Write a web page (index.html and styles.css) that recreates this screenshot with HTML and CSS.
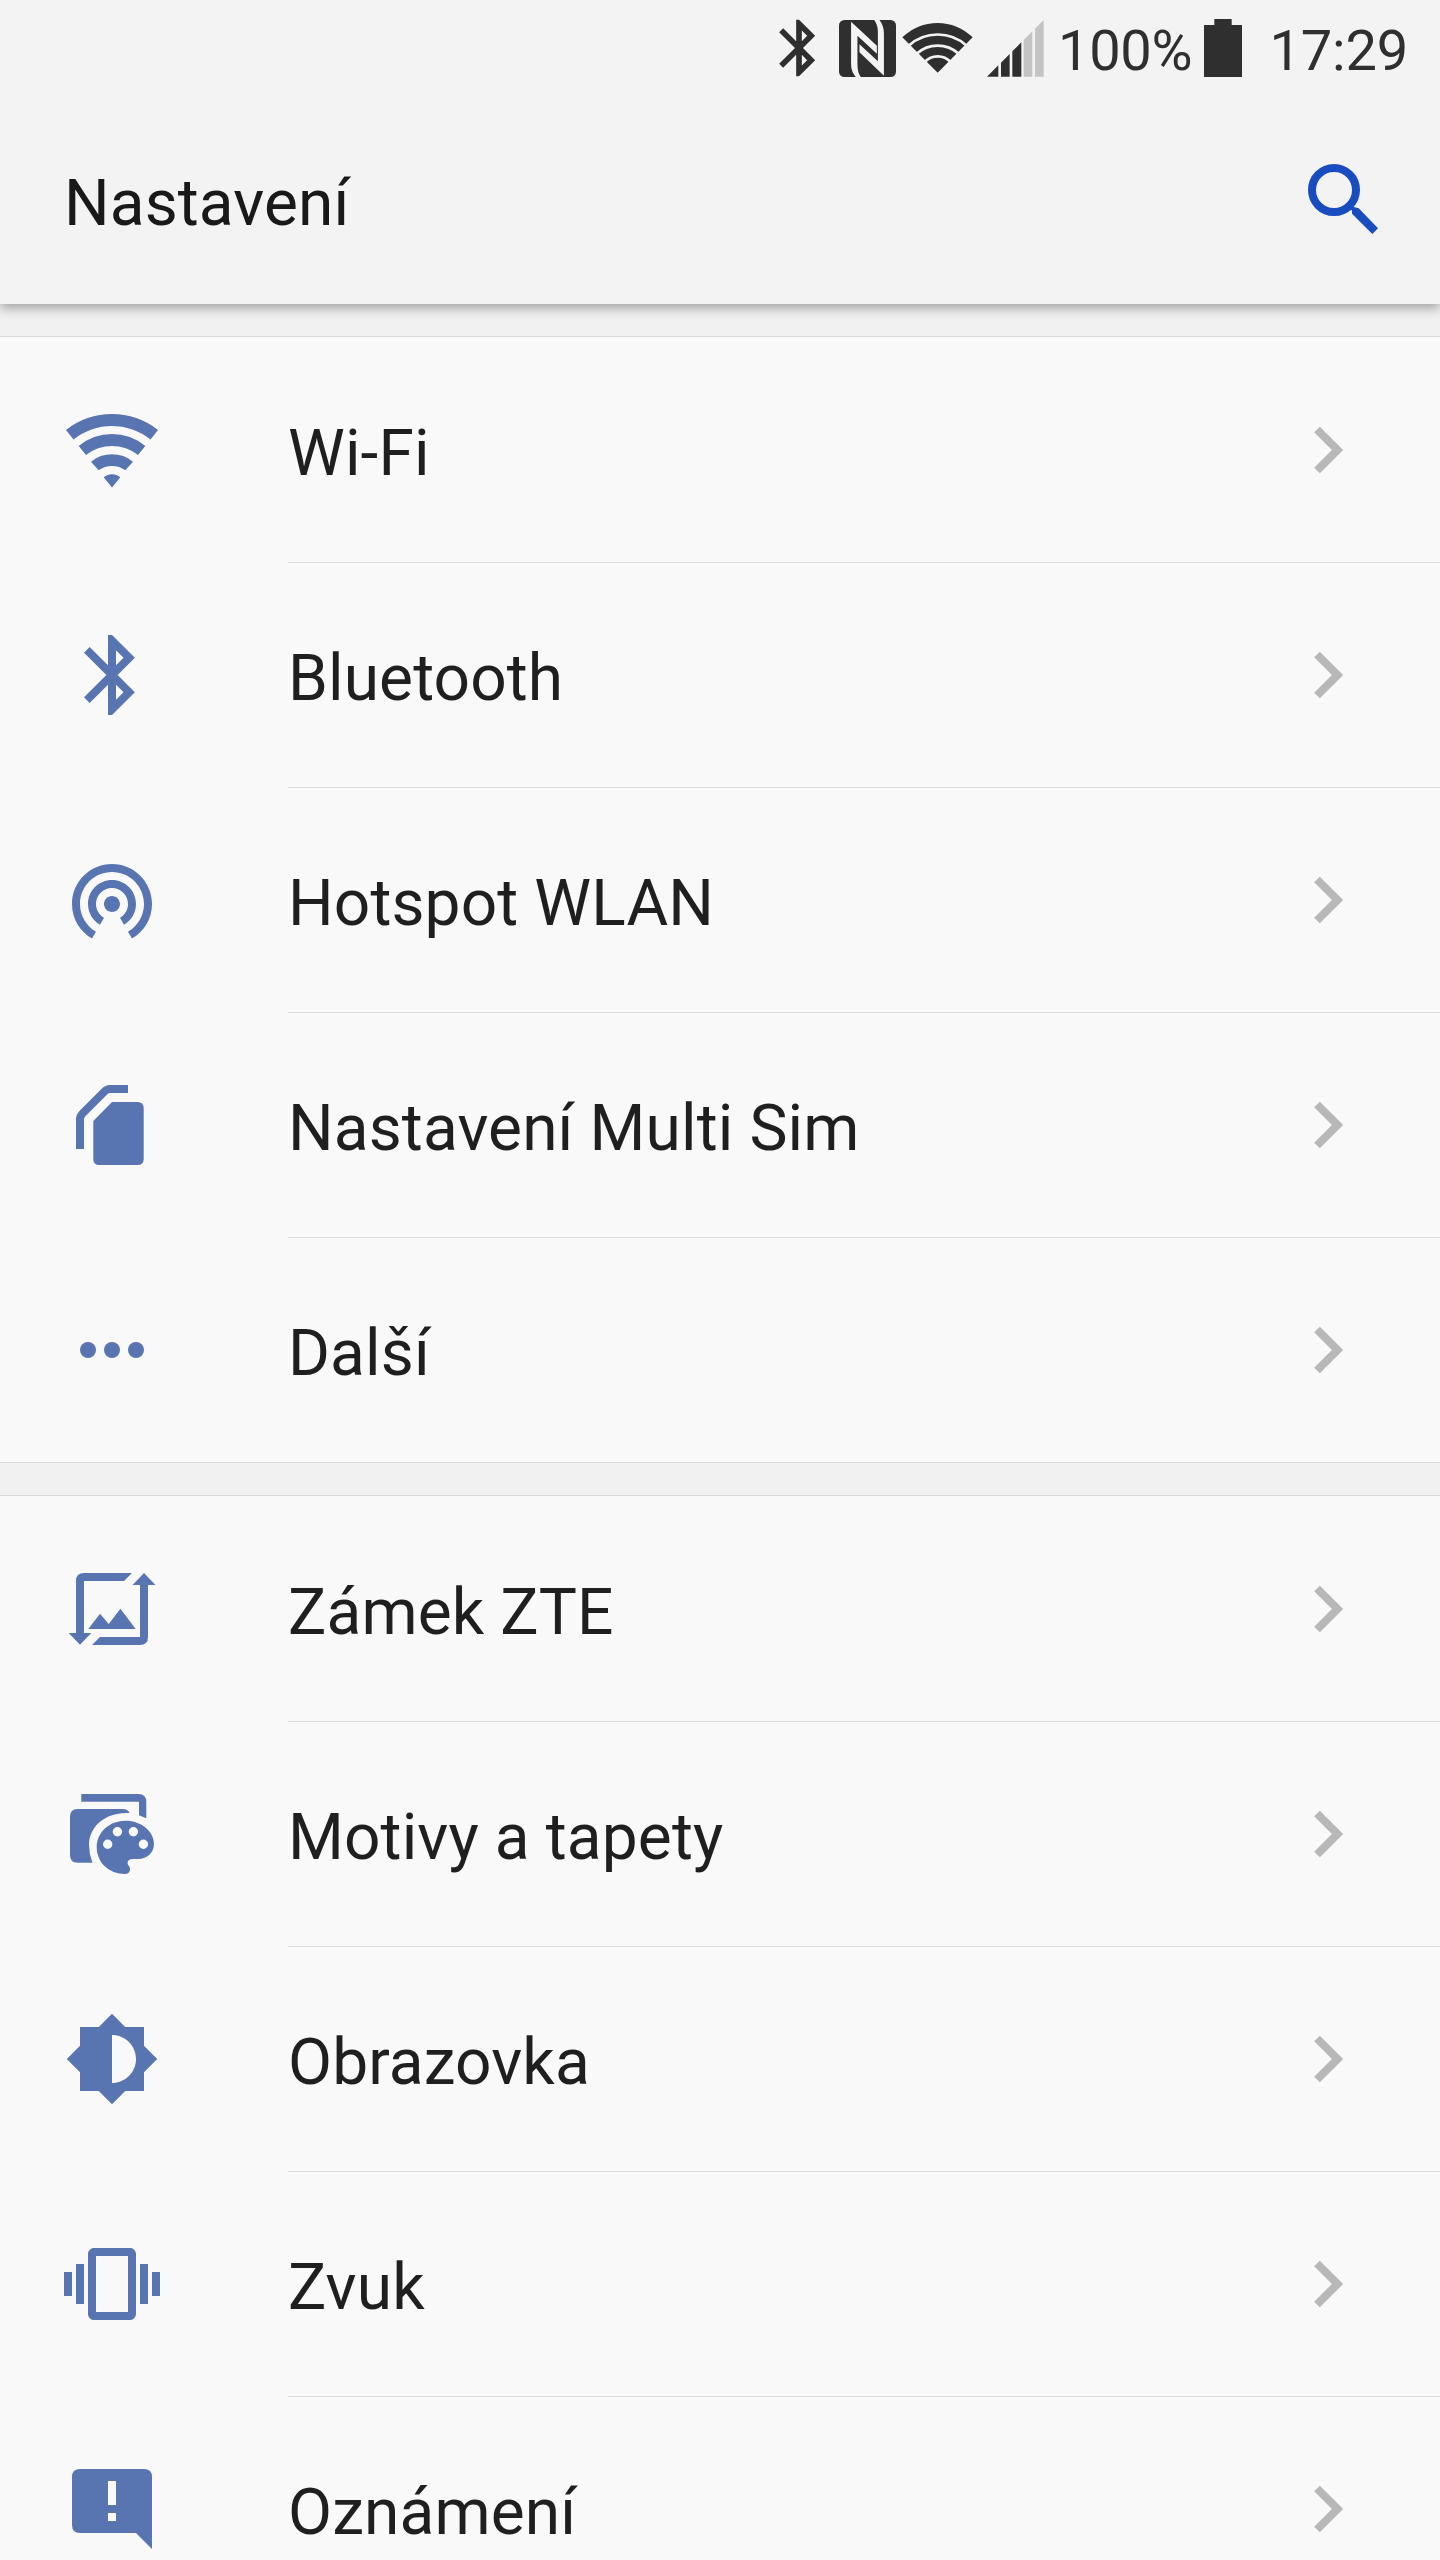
FILE: index.html
```
<!DOCTYPE html>
<html lang="cs">
<head>
<meta charset="utf-8">
<title>Nastavení</title>
<link rel="stylesheet" href="styles.css">
</head>
<body>
<svg class="defs" width="0" height="0">
  <symbol id="chevron" viewBox="0 0 30 48"><path d="M3 3.500L23.500 24 3 44.500" fill="none" stroke="currentColor" stroke-width="8"/></symbol>
  <symbol id="bluetooth" viewBox="0 0 24 24"><path fill="currentColor" d="M17.71 7.71L12 2h-1v7.59L6.41 5 5 6.41 10.590 12 5 17.590 6.410 19 11 14.410V22h1l5.710-5.710-4.300-4.290 4.300-4.290zM13 5.830l1.880 1.880L13 9.590V5.830zm1.880 10.460L13 18.170v-3.760l1.880 1.880z"/></symbol>
</svg>
<div class="screen">
  <header class="header">
    <div class="status">
      <svg class="st-bt"><use href="#bluetooth"/></svg>
      <svg class="st-nfc" viewBox="20 17 170 170">
        <rect x="20" y="17" width="170" height="170" rx="16" fill="currentColor"/>
        <path class="cut" d="M56 22L133 94V118L75 64V150Q75 175 86 188H71Q56 172 56 148Z"/>
        <path class="cut" d="M154 183L81 113V89L136 140V52Q136 30 124 16H140Q154 34 154 57Z"/>
      </svg>
      <svg class="st-wifi" viewBox="426 64 213 156">
        <path fill="currentColor" d="M427 113A150 150 0 0 1 638 113L533 219Z"/>
        <g class="cut-line"><path d="M446 138A130 130 0 0 1 620 138"/><path d="M470 162A94 94 0 0 1 596 162"/><path d="M494 187A53 53 0 0 1 572 187"/></g>
      </svg>
      <svg class="st-signal" viewBox="683 58 171 171">
        <path fill="currentColor" d="M683 228L717 194V228ZM725 228V186L751 160V228ZM759 228V152L786 125V228Z"/>
        <path class="dim" d="M793 228V118L819 92V228ZM827 228V84L853 58V228Z"/>
      </svg>
      <span class="st-percent">100%</span>
      <svg class="st-battery" viewBox="492 57 114 174"><path fill="currentColor" d="M492 75H523V57H575V75H606V231H492Z"/></svg>
      <span class="st-time">17:29</span>
    </div>
    <div class="toolbar">
      <h1 class="title">Nastavení</h1>
      <svg class="search" viewBox="804 492 210 210">
        <circle cx="882" cy="570" r="66" fill="none" stroke="currentColor" stroke-width="24"/>
        <path fill="currentColor" d="M926 630L939 620 956 625 1014 685 997 702 936 641V631Z"/>
      </svg>
    </div>
  </header>

  <main class="list">
    <section class="group">
      <div class="row">
        <svg class="icon" viewBox="0 0 96 96"><path d="M2 28A74 74 0 0 1 94 28L86.500 37.500A62 62 0 0 0 9.500 37.500ZM14.700 44A52 52 0 0 1 81.300 44L74 53A42 42 0 0 0 22 53ZM27 59.700A33 33 0 0 1 69 59.700L61.300 68.300A23 23 0 0 0 34.700 68.300ZM39.700 75.300A12.500 12.500 0 0 1 56.300 75.300L48 85.500Z"/></svg>
        <div class="cell"><span class="label">Wi-Fi</span><svg class="chev"><use href="#chevron"/></svg></div>
      </div>
      <div class="row">
        <svg class="icon"><use href="#bluetooth"/></svg>
        <div class="cell"><span class="label">Bluetooth</span><svg class="chev"><use href="#chevron"/></svg></div>
      </div>
      <div class="row">
        <svg class="icon" viewBox="0 0 24 24"><path d="M12 11c-1.100 0-2 .9-2 2s.9 2 2 2 2-.9 2-2-.9-2-2-2zm6 2c0-3.310-2.690-6-6-6s-6 2.690-6 6c0 2.220 1.210 4.150 3 5.190l1-1.740c-1.190-.7-2-1.970-2-3.450 0-2.210 1.790-4 4-4s4 1.790 4 4c0 1.480-.81 2.750-2 3.450l1 1.740c1.790-1.040 3-2.970 3-5.190zM12 3C6.480 3 2 7.480 2 13c0 3.700 2.010 6.920 4.990 8.650l1-1.730C5.610 18.530 4 15.960 4 13c0-4.420 3.580-8 8-8s8 3.580 8 8c0 2.960-1.610 5.530-4 6.920l1 1.730c2.990-1.730 5-4.950 5-8.650 0-5.520-4.480-10-10-10z"/></svg>
        <div class="cell"><span class="label">Hotspot WLAN</span><svg class="chev"><use href="#chevron"/></svg></div>
      </div>
      <div class="row">
        <svg class="icon" viewBox="0 0 96 96"><path class="line" d="M16 72V42Q16 39 19 36L40.500 14.500Q43 12 46 12H64"/><path d="M29.300 44L48 25H73.500Q79.700 25 79.700 31V82Q79.700 88 73.500 88H35.500Q29.300 88 29.300 82Z"/></svg>
        <div class="cell"><span class="label">Nastavení Multi Sim</span><svg class="chev"><use href="#chevron"/></svg></div>
      </div>
      <div class="row">
        <svg class="icon" viewBox="0 0 96 96"><circle cx="24" cy="48" r="8"/><circle cx="48" cy="48" r="8"/><circle cx="72" cy="48" r="8"/></svg>
        <div class="cell"><span class="label">Další</span><svg class="chev"><use href="#chevron"/></svg></div>
      </div>
    </section>

    <section class="group">
      <div class="row">
        <svg class="icon" viewBox="0 0 96 96"><path d="M68 12L60 20H20V72H27.300L16 83.700 4.700 72H12V20Q12 12 20 12ZM80 12L91.500 24H84V76Q84 84 76 84H28L36 76H76V24H68.500ZM24.300 68L36 52.700 44.700 63 56.400 47.700 71.700 68Z"/></svg>
        <div class="cell"><span class="label">Zámek ZTE</span><svg class="chev"><use href="#chevron"/></svg></div>
      </div>
      <div class="row">
        <svg class="icon" viewBox="0 0 96 96"><path d="M17.300 8H74.500Q82.300 8 82.300 16V32.300L75 29.300V15.700H17.300ZM13.500 23H59Q63.500 23 65.700 27C42 25.500 25 40 25 59Q25 68 28.500 76.700H13.500Q6 76.700 6 69V30.500Q6 23 13.500 23Z"/><path fill-rule="evenodd" d="M61.500 34.700C77.500 34.700 90 45.500 90 58C90 66.500 83 73 74.500 73H68C64 73 62.500 77 64.500 79.500C67.500 83 66 88 61 88C45 88 32.700 76.500 32.700 61.300S45.500 34.700 61.500 34.700ZM39 58.300a4.700 4.700 0 1 0 9.400 0a4.700 4.700 0 1 0-9.400 0ZM48.700 45.700a4.700 4.700 0 1 0 9.400 0a4.700 4.700 0 1 0-9.400 0ZM64.700 45.700a4.700 4.700 0 1 0 9.400 0a4.700 4.700 0 1 0-9.400 0ZM74.700 58.300a4.700 4.700 0 1 0 9.400 0a4.700 4.700 0 1 0-9.400 0Z"/></svg>
        <div class="cell"><span class="label">Motivy a tapety</span><svg class="chev"><use href="#chevron"/></svg></div>
      </div>
      <div class="row">
        <svg class="icon" viewBox="0 0 24 24"><path d="M20 15.310L23.310 12 20 8.690V4h-4.690L12 .69 8.690 4H4v4.690L.69 12 4 15.310V20h4.690L12 23.310 15.310 20H20v-4.690zM12 18V6c3.310 0 6 2.690 6 6s-2.690 6-6 6z"/></svg>
        <div class="cell"><span class="label">Obrazovka</span><svg class="chev"><use href="#chevron"/></svg></div>
      </div>
      <div class="row">
        <svg class="icon" viewBox="0 0 24 24"><path d="M0 15h2V9H0v6zm3 2h2V7H3v10zm19-8v6h2V9h-2zm-3 8h2V7h-2v10zM16.500 3h-9C6.670 3 6 3.670 6 4.500v15c0 .83.67 1.500 1.500 1.500h9c.83 0 1.500-.67 1.500-1.500v-15c0-.83-.67-1.500-1.500-1.500zM16 19H8V5h8v14z"/></svg>
        <div class="cell"><span class="label">Zvuk</span><svg class="chev"><use href="#chevron"/></svg></div>
      </div>
      <div class="row">
        <svg class="icon" viewBox="0 0 96 96"><path fill-rule="evenodd" d="M16 8H80Q88 8 88 16V88L72 72H16Q8 72 8 64V16Q8 8 16 8ZM44 20V44H52V20ZM44 52V60H52V52Z"/></svg>
        <div class="cell"><span class="label">Oznámení</span><svg class="chev"><use href="#chevron"/></svg></div>
      </div>
    </section>
  </main>
</div>
</body>
</html>
```
FILE: styles.css
```
* { box-sizing: border-box; }
html, body { margin: 0; }
body { font-family: Roboto, "Noto Sans", sans-serif; background: #f9f9f9; }
svg { display: block; flex: none; }
.defs { position: absolute; }

.screen {
  width: 1440px;
  height: 2560px;
  overflow: hidden;
  display: flex;
  flex-direction: column;
  background: #f1f1f1;
}

.header {
  flex: none;
  height: 304px;
  background: #f3f3f3;
  color: #2f2f2f;
  box-shadow: 0 4px 11px rgba(0, 0, 0, 0.34);
  z-index: 1;
}

.status {
  height: 96px;
  padding: 0 32px 0 765px;
  display: flex;
  align-items: center;
  font-size: 56px;
  line-height: 96px;
}
.st-bt { width: 68px; height: 68px; margin-right: 6px; }
.st-nfc { width: 57px; height: 57px; margin-right: 6px; }
.st-wifi { width: 71px; height: 52px; margin: -2px 14px 0 0; }
.st-signal { width: 57px; height: 57px; }
.st-percent { margin-left: 14px; width: 132px; padding-top: 5px; letter-spacing: -0.3px; white-space: nowrap; }
.st-battery { width: 38px; height: 58px; margin-left: 14px; }
.st-time { margin-left: auto; padding-top: 5px; letter-spacing: -0.2px; white-space: nowrap; }
.cut { fill: #f3f3f3; }
.cut-line { fill: none; stroke: #f3f3f3; stroke-width: 8; }
.dim { fill: #c4c4c4; }

.toolbar {
  height: 208px;
  padding: 0 62px 0 64px;
  display: flex;
  align-items: flex-start;
  justify-content: space-between;
}
.title {
  margin: 70px 0 0;
  font-size: 64px;
  line-height: 76px;
  font-weight: 400;
  letter-spacing: 0.1px;
  color: #191919;
}
.search { width: 70px; height: 70px; margin-top: 68px; color: #194dbf; }

.list {
  padding-top: 32px;
  display: flex;
  flex-direction: column;
  gap: 32px;
}
.group {
  flex: none;
  padding-top: 1px;
  background: #f9f9f9;
  border-top: 1px solid #d9d9d9;
}
.group:not(:last-child) { border-bottom: 1px solid #d9d9d9; }
.group:not(:last-child) .row:last-child { height: 224px; }
.group:not(:last-child) .row:last-child .cell { border-bottom: 0; }

.row {
  height: 225px;
  display: flex;
}
.icon {
  width: 96px;
  height: 96px;
  margin: 64px 64px 0;
  overflow: visible;
  fill: #5975b1;
  color: #5975b1;
}
.line { fill: none; stroke: #5975b1; stroke-width: 8; }
.cell {
  flex: 1;
  margin-left: 64px;
  padding-right: 96px;
  display: flex;
  align-items: center;
  justify-content: space-between;
  border-bottom: 1px solid #dcdcdc;
}
.label {
  padding-top: 8px;
  font-size: 64px;
  line-height: 76px;
  letter-spacing: 0.12px;
  color: #1f1f1f;
  white-space: nowrap;
}
.chev { width: 30px; height: 48px; color: #b8b8b8; }
```
